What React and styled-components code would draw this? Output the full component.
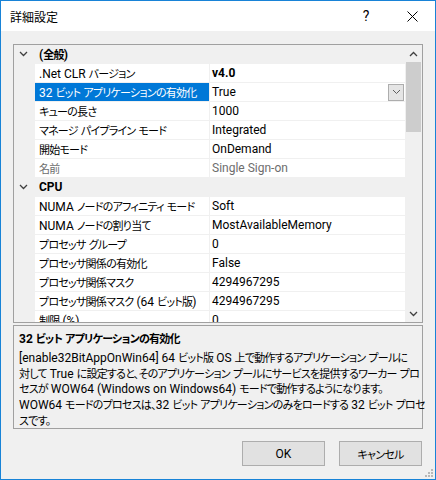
import React from 'react';
import styled, { createGlobalStyle } from 'styled-components';

const Global = createGlobalStyle`
  html, body { margin: 0; padding: 0; background: #fff; }
  body {
    font-family: Roboto, "Noto Sans CJK JP", sans-serif;
    font-size: 12px;
  }
`;

// Japanese runs: tighter, like the narrow kana of the Windows UI font
const Jp = styled.span`
  font-family: "Noto Sans CJK JP", sans-serif;
  font-size: 11px;
  letter-spacing: -0.75px;
  font-feature-settings: "palt";
`;

const CJK = /([\u3000-\u30ff\u4e00-\u9fff\uff00-\uffef]+)/;

const jp = text =>
  text.split(CJK).map((part, i) => (i % 2 ? <Jp key={i}>{part}</Jp> : part));

const Window = styled.div`
  position: relative;
  width: 436px;
  height: 480px;
  box-sizing: border-box;
  border: 1px solid #1883d7;
  background: #f0f0f0;
  display: flex;
  flex-direction: column;
`;

const TitleBar = styled.div`
  height: 30px;
  background: #fff;
  display: flex;
  align-items: center;
`;

const Title = styled.div`
  flex: 1;
  padding-left: 9px;
  font-family: "Noto Sans CJK JP", sans-serif;
  color: #000;
`;

const CaptionBtn = styled.div`
  width: 46px;
  height: 30px;
  display: flex;
  align-items: center;
  justify-content: center;
  font-size: 14px;
  color: #000;
`;

const Body = styled.div`
  flex: 1;
  padding: 13px 12px;
  display: flex;
  flex-direction: column;
`;

const Grid = styled.div`
  height: 279px;
  box-sizing: border-box;
  border: 1px solid #a0a0a0;
  background: #f0f0f0;
  display: flex;
  overflow: hidden;
`;

const Rows = styled.div`
  flex: 1;
  overflow: hidden;
`;

const Row = styled.div`
  display: flex;
  height: 19px;
  box-sizing: border-box;
  border-bottom: 1px solid #f0f0f0;
  line-height: 18px;
  white-space: nowrap;
`;

const Gutter = styled.div`
  width: 21px;
  flex: none;
  box-sizing: border-box;
  padding-right: 2px;
  background: #f0f0f0;
  display: flex;
  align-items: center;
  justify-content: center;
`;

const CategoryLabel = styled.div`
  flex: 1;
  font-weight: bold;
  padding-left: 4px;
  color: #000;
`;

const NameCell = styled.div`
  width: 175px;
  flex: none;
  padding-left: 4px;
  box-sizing: border-box;
  background: ${p => (p.$selected ? '#0078d7' : '#fff')};
  color: ${p => (p.$selected ? '#fff' : p.$disabled ? '#6d6d6d' : '#000')};
  border-right: 1px solid #f0f0f0;
  overflow: hidden;
`;

const ValueCell = styled.div`
  flex: 1;
  display: flex;
  align-items: center;
  background: #fff;
  padding-left: 2px;
  color: ${p => (p.$disabled ? '#6d6d6d' : '#000')};
  font-weight: ${p => (p.$bold ? 'bold' : 'normal')};
  overflow: hidden;
`;

const ValueText = styled.span`
  flex: 1;
`;

const DropBtn = styled.div`
  width: 16px;
  height: 17px;
  box-sizing: border-box;
  border: 1px solid #adadad;
  background: #e5e5e5;
  margin-right: 1px;
  display: flex;
  align-items: center;
  justify-content: center;
`;

const ScrollBar = styled.div`
  width: 17px;
  flex: none;
  background: #f0f0f0;
  display: flex;
  flex-direction: column;
`;

const ScrollArrow = styled.div`
  height: 17px;
  display: flex;
  align-items: center;
  justify-content: center;
`;

const ScrollTrack = styled.div`
  flex: 1;
`;

const Thumb = styled.div`
  height: 70px;
  margin: 0 1px;
  background: #cdcdcd;
`;

const Desc = styled.div`
  margin-top: 2px;
  height: 104px;
  box-sizing: border-box;
  border: 1px solid #a0a0a0;
  padding: 4px 5px;
  color: #000;
`;

const DescTitle = styled.div`
  font-weight: bold;
  line-height: 16px;
  margin-bottom: 3px;
`;

const DescLine = styled.div`
  line-height: 14.7px;
  white-space: nowrap;
`;

const Buttons = styled.div`
  margin-top: 12px;
  display: flex;
  justify-content: flex-end;
  gap: 14px;
  padding-right: 1px;
`;

const Button = styled.div`
  width: 83px;
  height: 25px;
  box-sizing: border-box;
  border: 1px solid #adadad;
  background: #e1e1e1;
  display: flex;
  align-items: center;
  justify-content: center;
  color: #000;
`;

const Grip = styled.svg`
  position: absolute;
  right: 2px;
  bottom: 2px;
`;

const Chevron = ({ up }) => (
  <svg width="9" height="6" viewBox="0 0 9 6">
    <path d={up ? 'M1 5 L4.5 1.5 L8 5' : 'M1 1 L4.5 4.5 L8 1'} fill="none" stroke="#404040" strokeWidth="1.3" />
  </svg>
);

const rows = [
  { cat: '(全般)' },
  { name: '.Net CLR バージョン', value: 'v4.0', bold: true },
  { name: '32 ビット アプリケーションの有効化', value: 'True', selected: true },
  { name: 'キューの長さ', value: '1000' },
  { name: 'マネージ パイプライン モード', value: 'Integrated' },
  { name: '開始モード', value: 'OnDemand' },
  { name: '名前', value: 'Single Sign-on', disabled: true },
  { cat: 'CPU' },
  { name: 'NUMA ノードのアフィニティ モード', value: 'Soft' },
  { name: 'NUMA ノードの割り当て', value: 'MostAvailableMemory' },
  { name: 'プロセッサ グループ', value: '0' },
  { name: 'プロセッサ関係の有効化', value: 'False' },
  { name: 'プロセッサ関係マスク', value: '4294967295' },
  { name: 'プロセッサ関係マスク (64 ビット版)', value: '4294967295' },
  { name: '制限 (%)', value: '0' },
];

const descLines = [
  '[enable32BitAppOnWin64] 64 ビット版 OS 上で動作するアプリケーション プールに',
  '対して True に設定すると、そのアプリケーション プールにサービスを提供するワーカー プロ',
  'セスが WOW64 (Windows on Windows64) モードで動作するようになります。',
  'WOW64 モードのプロセスは、32 ビット アプリケーションのみをロードする 32 ビット プロセ',
  'スです。',
];

export default function App() {
  return (
    <>
      <Global />
      <Window>
        <TitleBar>
          <Title>詳細設定</Title>
          <CaptionBtn>?</CaptionBtn>
          <CaptionBtn>
            <svg width="11" height="11" viewBox="0 0 11 11">
              <path d="M0.5 0.5 L10.5 10.5 M10.5 0.5 L0.5 10.5" stroke="#000" strokeWidth="1" />
            </svg>
          </CaptionBtn>
        </TitleBar>
        <Body>
          <Grid>
            <Rows>
              {rows.map((r, i) =>
                r.cat ? (
                  <Row key={i}>
                    <Gutter><Chevron /></Gutter>
                    <CategoryLabel>{jp(r.cat)}</CategoryLabel>
                  </Row>
                ) : (
                  <Row key={i}>
                    <Gutter />
                    <NameCell $selected={r.selected} $disabled={r.disabled}>{jp(r.name)}</NameCell>
                    <ValueCell $bold={r.bold} $disabled={r.disabled}>
                      <ValueText>{r.value}</ValueText>
                      {r.selected && (
                        <DropBtn>
                          <svg width="9" height="6" viewBox="0 0 9 6">
                            <path d="M1 1 L4.5 4.5 L8 1" fill="none" stroke="#606060" strokeWidth="1" />
                          </svg>
                        </DropBtn>
                      )}
                    </ValueCell>
                  </Row>
                )
              )}
            </Rows>
            <ScrollBar>
              <ScrollArrow><Chevron up /></ScrollArrow>
              <ScrollTrack><Thumb /></ScrollTrack>
              <ScrollArrow><Chevron /></ScrollArrow>
            </ScrollBar>
          </Grid>
          <Desc>
            <DescTitle>{jp('32 ビット アプリケーションの有効化')}</DescTitle>
            {descLines.map((l, i) => <DescLine key={i}>{jp(l)}</DescLine>)}
          </Desc>
          <Buttons>
            <Button>OK</Button>
            <Button>{jp('キャンセル')}</Button>
          </Buttons>
        </Body>
        <Grip width="8" height="8" viewBox="0 0 8 8">
          {[[6, 0], [6, 3], [3, 3], [6, 6], [3, 6], [0, 6]].map(([x, y], i) => (
            <rect key={i} x={x} y={y} width="2" height="2" fill="#b8b8b8" />
          ))}
        </Grip>
      </Window>
    </>
  );
}
